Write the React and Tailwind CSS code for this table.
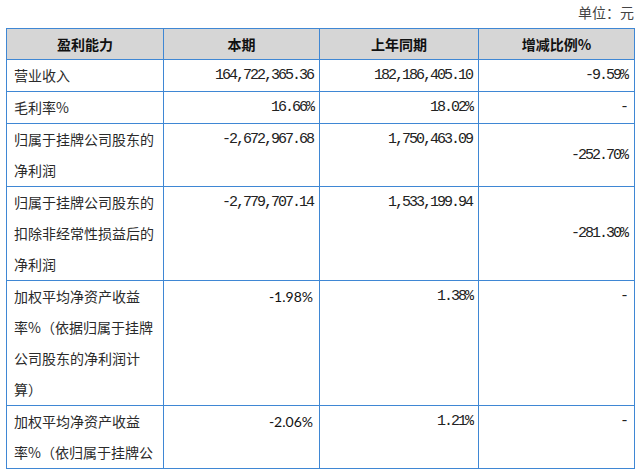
const rows = [
  { label: ['营业收入'], cur: '164,722,365.36', prev: '182,186,405.10', chg: '-9.59%' },
  { label: ['毛利率%'], cur: '16.66%', prev: '18.02%', chg: '-' },
  { label: ['归属于挂牌公司股东的', '净利润'], cur: '-2,672,967.68', prev: '1,750,463.09', chg: '-252.70%', mid: true },
  { label: ['归属于挂牌公司股东的', '扣除非经常性损益后的', '净利润'], cur: '-2,779,707.14', prev: '1,533,199.94', chg: '-281.30%', mid: true },
  { label: ['加权平均净资产收益', '率%（依据归属于挂牌', '公司股东的净利润计', '算）'], cur: '-1.98%', prev: '1.38%', chg: '-', sans: true },
  { label: ['加权平均净资产收益', '率%（依归属于挂牌公'], cur: '-2.06%', prev: '1.21%', chg: '-', sans: true },
];

const cjk = { fontFamily: '"Noto Sans CJK SC", sans-serif' };
const mono = { fontFamily: '"Liberation Mono", monospace' };

export default function App() {
  return (
    <div className="w-[639px] h-[473px] bg-white overflow-hidden text-[#222]" style={cjk}>
      <div className="h-[28px] pr-[5px] pt-[1px] text-right text-[14px] leading-[22px] text-[#444]">单位：元</div>
      <table className="ml-[6px] w-[628px] border-collapse table-fixed">
        <colgroup>
          <col className="w-[157px]" />
          <col className="w-[156px]" />
          <col className="w-[159px]" />
          <col className="w-[156px]" />
        </colgroup>
        <thead>
          <tr className="bg-[#d6d6d6]">
            {['盈利能力', '本期', '上年同期', '增减比例%'].map((h) => (
              <th key={h} className="border border-[#3f87d4] p-0 text-center text-[14px] font-bold leading-[30px] text-[#111]">
                <div>{h}</div>
              </th>
            ))}
          </tr>
        </thead>
        <tbody>
          {rows.map((r, i) => (
            <tr key={i}>
              <td className="border border-[#3f87d4] align-top p-0 pl-[7px] text-[14px] leading-[31px] text-[#2a2a2a]">
                {r.label.map((l) => (
                  <div key={l} className="whitespace-nowrap">{l}</div>
                ))}
              </td>
              <td className="border border-[#3f87d4] align-top p-0 pr-[6px] text-right text-[14px] leading-[31px]">
                {r.sans ? (
                  <div className="text-[14px] text-[#111]" style={{ fontFamily: 'Lato, sans-serif' }}>{r.cur}</div>
                ) : (
                  <div className="text-[15px] tracking-[-2px] text-[#222]" style={mono}>{r.cur}</div>
                )}
              </td>
              <td className="border border-[#3f87d4] align-top p-0 pr-[6px] text-right text-[14px] leading-[31px]">
                <div className="text-[15px] tracking-[-2px] text-[#222]" style={mono}>{r.prev}</div>
              </td>
              <td className={`border border-[#3f87d4] p-0 pr-[7px] text-right text-[14px] leading-[31px] ${r.mid ? 'align-middle' : 'align-top'}`}>
                <div className="text-[15px] tracking-[-2px] text-[#222]" style={mono}>{r.chg}</div>
              </td>
            </tr>
          ))}
        </tbody>
      </table>
    </div>
  );
}
